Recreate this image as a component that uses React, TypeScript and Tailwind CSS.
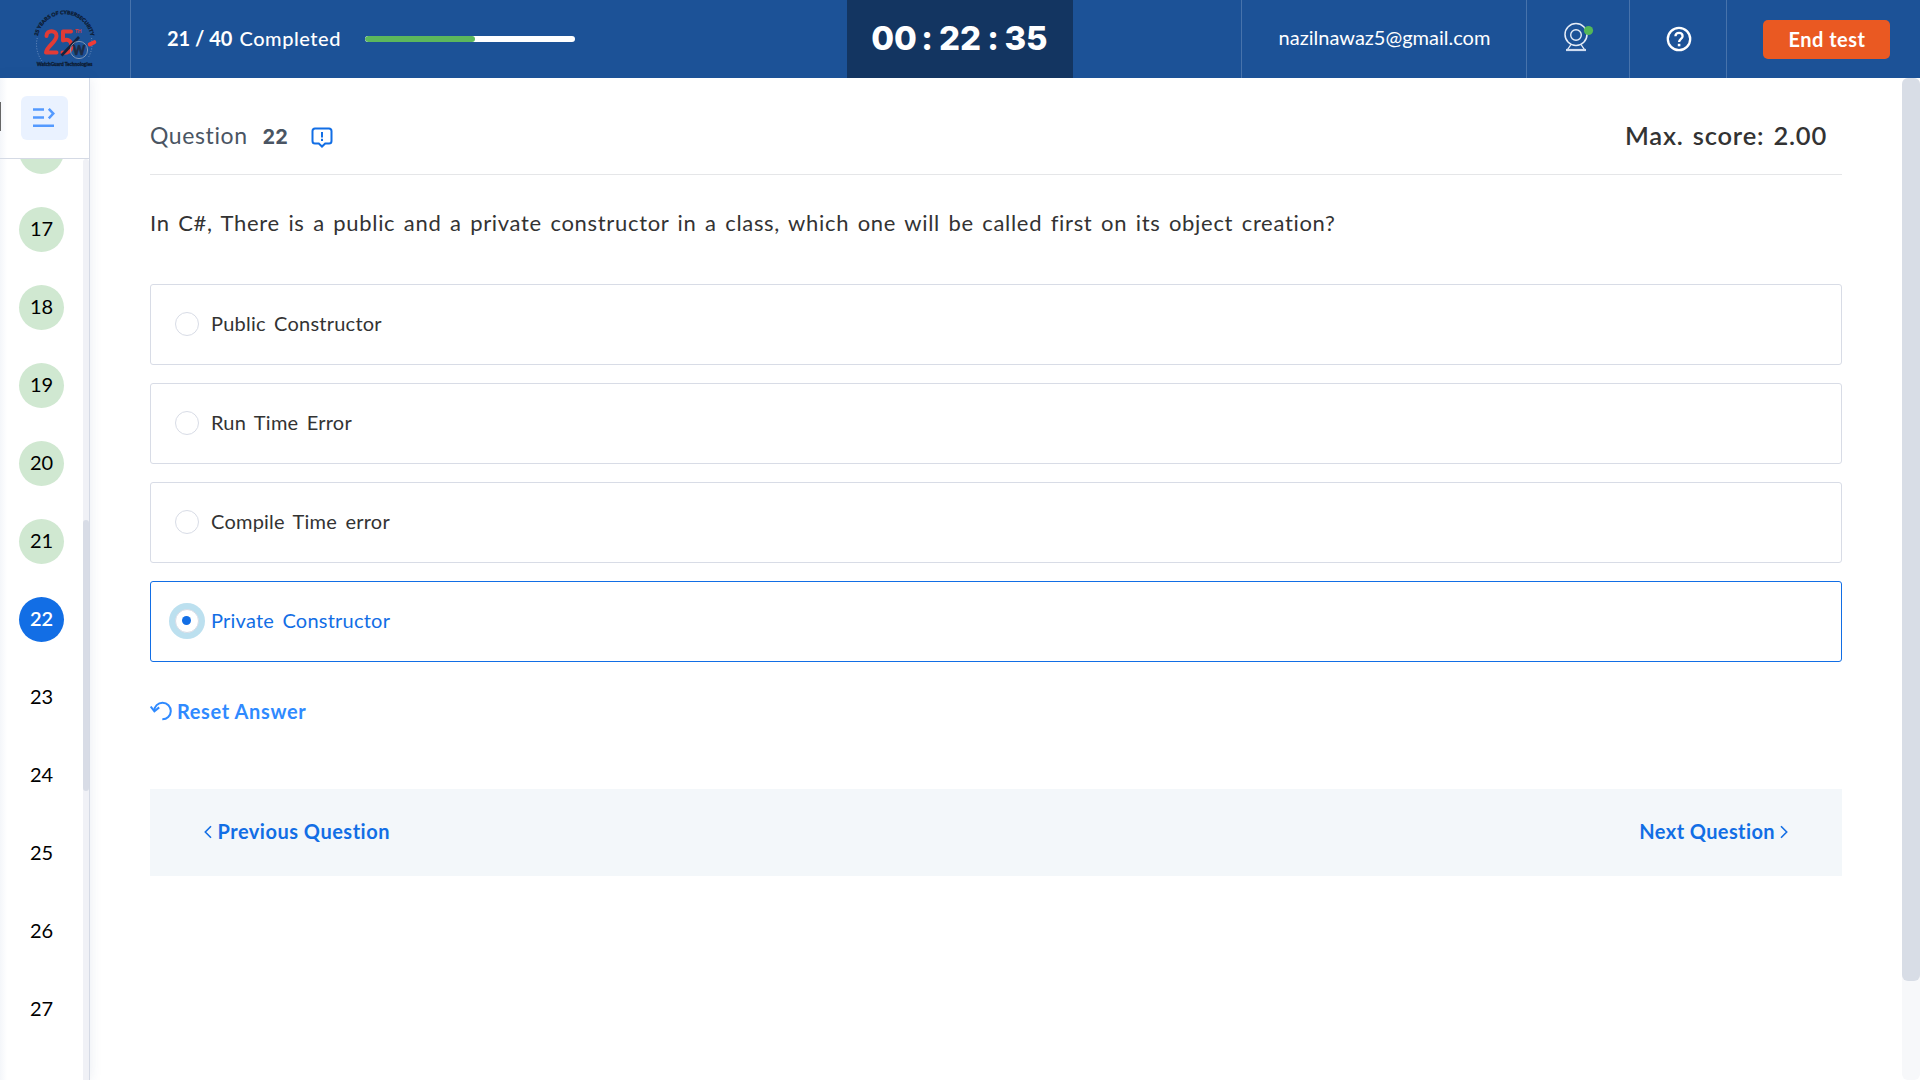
import React from "react";

const questionNumbers = [16, 17, 18, 19, 20, 21, 22, 23, 24, 25, 26, 27];
const currentQuestion = 22;

const options = ["Public Constructor", "Run Time Error", "Compile Time error", "Private Constructor"];
const selectedOption = 3;

function Logo() {
  return (
    <svg width="80" height="65" viewBox="0 0 80 65" className="ml-[25px] mb-[2px]">
      <defs>
        <path id="logo-arc" d="M 12.800 30 A 27 27 0 0 1 65.8 30" />
      </defs>
      <path d="M 12.3 32 A 27.5 27.5 0 0 0 17 55" fill="none" stroke="#7f9cc6" strokeWidth="0.8" strokeDasharray="1 1.6" />
      <path d="M 66.5 32 A 27.5 27.5 0 0 1 63 52" fill="none" stroke="#7f9cc6" strokeWidth="0.8" strokeDasharray="1 1.6" />
      <text fontFamily="Lato, sans-serif" fontSize="5" fontWeight="900" fill="#0d1c33" stroke="#0d1c33" strokeWidth="0.3">
        <textPath href="#logo-arc" startOffset="0" textLength="74" lengthAdjust="spacingAndGlyphs">
          25 YEARS OF CYBERSECURITY
        </textPath>
      </text>
      <path d="M21.5 30 C21.5 23.500 31.500 23.500 31.500 30 C31.500 36 22 40 21 46.500 H31.500" fill="none" stroke="#e23b36" strokeWidth="4" strokeLinecap="round" strokeLinejoin="round" />
      <path d="M46 25.500 H38 V34.500 C43 32.500 46.500 35 46.500 40 C46.500 45 42 47.500 37.500 46.500" fill="none" stroke="#e23b36" strokeWidth="4" strokeLinecap="round" strokeLinejoin="round" />
      <text x="50" y="27.200" fontFamily="Lato, sans-serif" fontSize="5.500" fontWeight="700" fill="#e23b36" textLength="6.500" lengthAdjust="spacingAndGlyphs">TH</text>
      <path d="M36.500 49.500 L54 31" stroke="#14233f" strokeWidth="2.600" />
      <circle cx="54" cy="44" r="8.600" fill="none" stroke="#7f95b5" strokeWidth="1" />
      <text x="54" y="48.800" textAnchor="middle" fontFamily="Lato, sans-serif" fontSize="13" fontWeight="900" fill="#1d2b44" stroke="#1d2b44" strokeWidth="0.6" textLength="12.500" lengthAdjust="spacingAndGlyphs">W</text>
      <path d="M64.800 38.400 L69.300 36.200" stroke="#f03b36" strokeWidth="4" strokeLinecap="round" />
      <text x="11.800" y="59.500" fontFamily="Lato, sans-serif" fontSize="5.200" fontWeight="900" fill="#0d1c33" stroke="#0d1c33" strokeWidth="0.3" textLength="55.500" lengthAdjust="spacingAndGlyphs">
        WatchGuard Technologies
      </text>
    </svg>
  );
}

function WebcamIcon() {
  return (
    <svg width="32" height="32" viewBox="0 0 32 32" fill="none">
      <circle cx="13" cy="13.500" r="11" stroke="#e6edf7" strokeWidth="1.500" />
      <circle cx="13" cy="14" r="5.300" stroke="#e6edf7" strokeWidth="1.400" />
      <path d="M8 23.500 L4.500 28.700 M18 23.500 L21.500 28.700" stroke="#e6edf7" strokeWidth="1.300" />
      <path d="M3 29 H23" stroke="#cfdcf0" strokeWidth="2.200" />
      <circle cx="25.500" cy="9.500" r="4.600" fill="#54b757" />
    </svg>
  );
}

function HelpIcon() {
  return (
    <svg width="26" height="26" viewBox="0 0 26 26" fill="none" stroke="#fff">
      <circle cx="13" cy="13" r="11.200" strokeWidth="2.300" />
      <path d="M9.400 10.300 C9.600 5.600 16.600 5.800 16.600 10.200 C16.600 12.700 13.100 13 13.100 15.900" strokeWidth="2.300" />
      <path d="M13.100 17.800 V20.300" strokeWidth="2.600" />
    </svg>
  );
}

function Header() {
  return (
    <header className="flex h-[78px] shrink-0 items-stretch bg-[#1c5297] text-white">
      <div className="flex w-[131px] items-center border-r border-[#4773ac]">
        <Logo />
      </div>
      <div className="flex w-[716px] items-center pb-[2px] pl-[36px] text-[20px]">
        <span className="font-bold">21 / 40</span>
        <span className="ml-[7px] font-medium tracking-[0.55px]">Completed</span>
        <div className="mt-[2px] ml-[24px] h-[6px] w-[210px] overflow-hidden rounded-full bg-white">
          <div className="h-full w-[110px] rounded-full bg-[#5cb85c]" />
        </div>
      </div>
      <div className="flex w-[226px] items-center justify-center bg-[#133561] font-[Inter,sans-serif] text-[33px] font-extrabold">
        <span className="w-[46px] text-center">00</span>
        <span className="w-[20px] text-center">:</span>
        <span className="w-[46px] text-center">22</span>
        <span className="w-[20px] text-center">:</span>
        <span className="w-[46px] text-center">35</span>
      </div>
      <div className="ml-auto flex">
        <div className="flex w-[285px] items-center justify-center border-l border-[#4773ac] pb-[4px] pl-px text-[20px]">
          nazilnawaz5@gmail.com
        </div>
        <div className="flex w-[103px] items-start border-l border-[#4773ac] pt-[21px] pl-[36px]">
          <WebcamIcon />
        </div>
        <div className="flex w-[97px] items-center justify-center border-l border-[#4773ac] pl-px">
          <HelpIcon />
        </div>
        <div className="flex w-[194px] items-center border-l border-[#4773ac] pt-px pl-[36px]">
          <button className="h-[39px] w-[127px] rounded-[5px] bg-[#ea5922] pb-[2px] pl-px text-[20px] font-bold tracking-[0.5px]">
            End test
          </button>
        </div>
      </div>
    </header>
  );
}

function Sidebar() {
  return (
    <aside className="flex w-[90px] shrink-0 flex-col border-r border-[#d5dae5] bg-linear-to-r from-[#f4f6fa] via-white via-8% to-white shadow-[0_0_12px_rgba(40,70,130,0.10)]">
      <div className="flex h-[81px] shrink-0 items-center border-b border-[#d5dae5]">
        <div className="mt-[-4px] h-[29px] w-px bg-[#666]" />
        <button className="mt-[-1px] ml-5 flex h-[44px] w-[47px] items-center justify-center rounded-[6px] bg-[#eaf2ff]">
          <svg width="23" height="20" viewBox="0 0 23 20" fill="none" stroke="#549aff" strokeWidth="2.500" className="mr-[2px] mb-[2px]">
            <path d="M1 2.500 H12 M1 10.500 H12 M1 18.700 H22" />
            <path d="M16.800 1.800 L21.300 6.600 L16.800 11.400" />
          </svg>
        </button>
      </div>
      <div className="flex min-h-0 flex-1 overflow-hidden">
        <nav className="-mt-[46px] flex w-[83px] flex-col items-center">
          {questionNumbers.map((n) => (
            <div key={n} className="h-[78px] shrink-0 pt-4">
              <div
                className={
                  n === currentQuestion
                    ? "flex size-[45px] items-center justify-center rounded-full bg-[#126ee5] pb-[3px] text-[20px] font-semibold text-white"
                    : n < currentQuestion
                      ? "flex size-[45px] items-center justify-center rounded-full bg-[#d0e8d1] pb-[4px] text-[20px] text-black"
                      : "flex size-[45px] items-center justify-center pb-[4px] text-[20px] text-black"
                }
              >
                {n}
              </div>
            </div>
          ))}
        </nav>
        <div className="w-[6px] rounded-t-[3px] bg-[#f0f1f6] pt-[361px]">
          <div className="h-[271px] rounded-[3px] bg-[#d8dce6]" />
        </div>
      </div>
    </aside>
  );
}

function Option({ label, selected }: { label: string; selected: boolean }) {
  return (
    <div
      className={
        selected
          ? "flex h-[81px] items-center rounded-[3px] border border-[#126ee5] pb-px pl-[24px] text-[#126ee5]"
          : "flex h-[81px] items-center rounded-[3px] border border-[#d8dce6] pb-px pl-[24px] text-[#333]"
      }
    >
      <span
        className={
          selected
            ? "flex size-6 items-center justify-center rounded-full border border-[#d8dce6] bg-white shadow-[0_0_0_6px_#bce0ef]"
            : "size-6 rounded-full border border-[#d8dce6] bg-white"
        }
      >
        {selected && <span className="mr-px mb-px size-[9px] rounded-full bg-[#126ee5]" />}
      </span>
      <span className="ml-[12px] pb-[2px] text-[20px] tracking-[0.23px] [word-spacing:3px]">{label}</span>
    </div>
  );
}

function Question() {
  return (
    <main className="flex-1 pr-[60px] pl-[60px]">
      <div className="flex h-[97px] items-center border-b border-[#e5e6e8] pt-[18px]">
        <span className="text-[23px] tracking-[0.6px] text-[#4a5563]">Question</span>
        <span className="mt-[3px] ml-[15px] font-[Inter,sans-serif] text-[20px] font-bold text-[#4a5563]">22</span>
        <svg width="22" height="22" viewBox="0 0 22 22" fill="none" stroke="#126ee5" strokeWidth="2" className="mt-[5px] ml-[23px]">
          <path d="M4 1.500 H18 A2.600 2.600 0 0 1 20.500 4 V14 A2.600 2.600 0 0 1 18 16.600 H14.200 L11 19.600 L7.800 16.600 H4 A2.600 2.600 0 0 1 1.500 14 V4 A2.600 2.600 0 0 1 4 1.500 Z" />
          <path d="M11 5 V10.400 M11 11.800 V14" />
        </svg>
        <span className="mr-[15px] ml-auto text-[25.500px] font-semibold tracking-[0.8px] text-[#333] [word-spacing:2px]">
          Max. score: 2.00
        </span>
      </div>
      <p className="mt-[33px] h-[30px] text-[22px] leading-[30px] tracking-[0.68px] whitespace-nowrap text-[#333] [word-spacing:2.250px]">
        In C#, There is a public and a private constructor in a class, which one will be called first on its object
        creation?
      </p>
      <div className="mt-[46px] flex flex-col gap-[18px]">
        {options.map((label, i) => (
          <Option key={label} label={label} selected={i === selectedOption} />
        ))}
      </div>
      <button className="mt-[35px] flex h-[28px] items-center text-[20px] font-bold tracking-[0.62px] text-[#2f8aff]">
        <svg width="23" height="20" viewBox="0 0 23 20" fill="none" stroke="#2f8aff" strokeWidth="2">
          <path d="M4.200 10 A8.300 8.300 0 1 1 12.300 18.300" />
          <path d="M0.700 5.500 L4.400 10.300 L9.200 6.400" />
        </svg>
        <span className="ml-[4px] pb-px">Reset Answer</span>
      </button>
      <div className="mt-[64px] flex h-[87px] items-center justify-between bg-[#f3f7fa] px-[54px] pb-[2px] text-[20px] font-bold text-[#126ee5]">
        <button className="flex items-center tracking-[0.5px]">
          <svg width="8" height="14" viewBox="0 0 8 14" fill="none" stroke="#126ee5" strokeWidth="1.600" className="mt-px">
            <path d="M7 1.200 L1.300 7 L7 12.800" />
          </svg>
          <span className="ml-[5.500px] pb-px">Previous Question</span>
        </button>
        <button className="flex items-center tracking-[0.4px]">
          <span className="pb-px">Next Question</span>
          <svg width="8" height="14" viewBox="0 0 8 14" fill="none" stroke="#126ee5" strokeWidth="1.600" className="mt-px ml-[5px]">
            <path d="M1 1.200 L6.700 7 L1 12.800" />
          </svg>
        </button>
      </div>
    </main>
  );
}

export default function App() {
  return (
    <div className="flex h-screen w-full flex-col overflow-hidden bg-white font-[Lato,sans-serif]">
      <Header />
      <div className="flex min-h-0 flex-1">
        <Sidebar />
        <Question />
        <div className="w-[18px] shrink-0 rounded-[6px] bg-[#f7f8fa]">
          <div className="h-[903px] rounded-[6px] bg-[#d8dde6]" />
        </div>
      </div>
    </div>
  );
}
